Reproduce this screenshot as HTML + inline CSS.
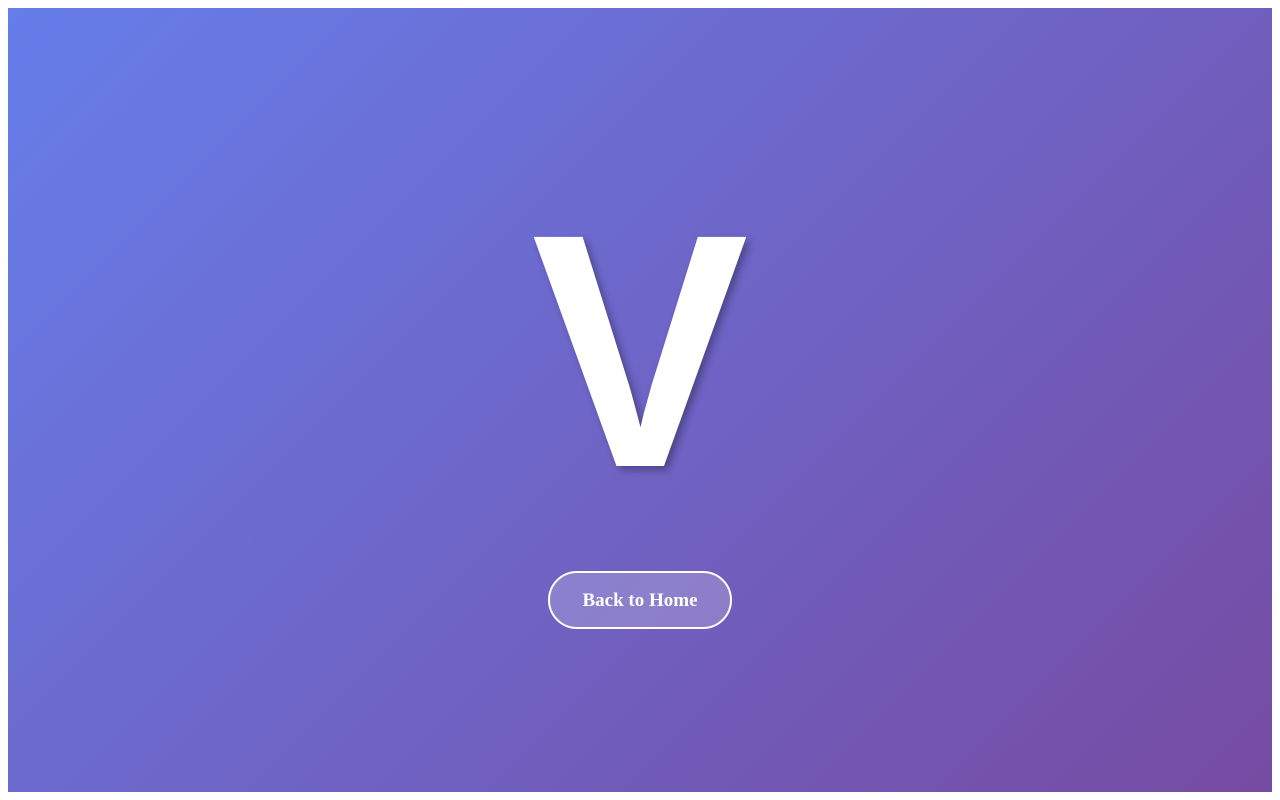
<!DOCTYPE html>
<html><head><style>
html,body{margin:0;padding:0;background:#fff;}
.bg{position:absolute;left:8px;top:8px;width:1264px;height:784px;background:linear-gradient(135deg,#667eea 0%,#764ba2 100%);overflow:hidden;}
.v{position:absolute;left:0;width:1264px;top:177px;text-align:center;font-family:"Liberation Sans",sans-serif;font-weight:bold;font-size:333px;line-height:1;color:#fff;text-shadow:4px 4px 8px rgba(0,0,0,0.3);transform:scaleX(0.977);transform-origin:632px 0;}
.btn{position:absolute;left:540px;top:563px;width:180px;height:54px;border:2px solid #fff;border-radius:30px;background:rgba(255,255,255,0.2);color:#fff;font-family:"Liberation Serif",serif;font-weight:bold;font-size:19px;line-height:56px;text-align:center;}
</style></head><body>
<div class="bg">
<div class="v">V</div>
<div class="btn">Back to Home</div>
</div>
</body></html>
